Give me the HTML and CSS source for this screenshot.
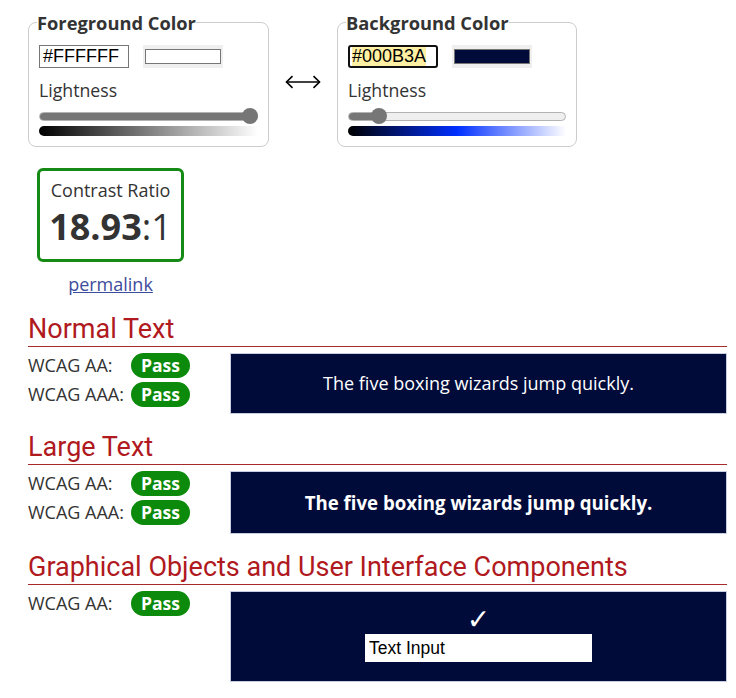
FILE: index.html
```html
<!DOCTYPE html>
<html lang="en">
<head>
<meta charset="utf-8">
<title>Contrast Checker</title>
<link rel="stylesheet" href="styles.css">
</head>
<body>
<div class="page">
  <div class="pickers">
    <fieldset class="picker">
      <legend>Foreground Color</legend>
      <div class="color-row">
        <div class="hex-input">#FFFFFF</div>
        <div class="swatch-btn"><div class="swatch swatch-fg"></div></div>
      </div>
      <div class="light-label">Lightness</div>
      <div class="slider">
        <div class="track"><div class="fill" style="width: calc(100% - 8px)"></div></div>
        <div class="thumb" style="left: calc(100% - 16px)"></div>
      </div>
      <div class="grad grad-fg"></div>
    </fieldset>
    <div class="swap">
      <svg width="36" height="14" viewBox="0 0 36 14" aria-hidden="true">
        <path d="M1.5 7 H34.5" stroke="#000" stroke-width="1.6" fill="none"/>
        <path d="M7.5 1.2 L1.5 7 L7.5 12.8" stroke="#000" stroke-width="1.6" fill="none"/>
        <path d="M28.5 1.2 L34.5 7 L28.5 12.8" stroke="#000" stroke-width="1.6" fill="none"/>
      </svg>
    </div>
    <fieldset class="picker">
      <legend>Background Color</legend>
      <div class="color-row">
        <div class="hex-input focused"><span class="sel">#000B3A</span></div>
        <div class="swatch-btn"><div class="swatch swatch-bg"></div></div>
      </div>
      <div class="light-label">Lightness</div>
      <div class="slider">
        <div class="track"><div class="fill" style="width: calc((100% - 16px) * 0.114 + 8px)"></div></div>
        <div class="thumb" style="left: calc((100% - 16px) * 0.114)"></div>
      </div>
      <div class="grad grad-bg"></div>
    </fieldset>
  </div>

  <div class="ratio-wrap">
    <div class="ratio">
      <div class="ratio-label">Contrast Ratio</div>
      <div class="ratio-value"><b>18.93</b>:1</div>
    </div>
    <a class="permalink" href="#">permalink</a>
  </div>

  <section class="result">
    <h2>Normal Text</h2>
    <div class="result-body">
      <div class="checks">
        <div class="check"><span class="check-label">WCAG AA:</span><span class="badge">Pass</span></div>
        <div class="check"><span class="check-label">WCAG AAA:</span><span class="badge">Pass</span></div>
      </div>
      <div class="sample sample-normal">The five boxing wizards jump quickly.</div>
    </div>
  </section>

  <section class="result">
    <h2>Large Text</h2>
    <div class="result-body">
      <div class="checks">
        <div class="check"><span class="check-label">WCAG AA:</span><span class="badge">Pass</span></div>
        <div class="check"><span class="check-label">WCAG AAA:</span><span class="badge">Pass</span></div>
      </div>
      <div class="sample sample-large">The five boxing wizards jump quickly.</div>
    </div>
  </section>

  <section class="result">
    <h2>Graphical Objects and User Interface Components</h2>
    <div class="result-body">
      <div class="checks">
        <div class="check"><span class="check-label">WCAG AA:</span><span class="badge">Pass</span></div>
      </div>
      <div class="sample sample-ui">
        <div class="tick">✓</div>
        <div class="text-input">Text Input</div>
      </div>
    </div>
  </section>
</div>
</body>
</html>
```
FILE: styles.css
```css
* { box-sizing: border-box; }
html, body { margin: 0; background: #fff; }
body {
  font-family: "Open Sans", "DejaVu Sans", sans-serif;
  font-size: 18px;
  color: #333;
}
.page {
  width: 736px;
  padding: 11px 9px 0 28px;
}

/* pickers */
.pickers {
  display: flex;
  align-items: flex-start;
}
.picker {
  width: 241px;
  margin: 0;
  padding: 0 10px 10px;
  border: 1px solid #ccc;
  border-radius: 8px;
  min-inline-size: 0;
}
.picker + .swap + .picker { width: 240px; }
.picker legend {
  padding: 0;
  margin-left: -2px;
  font-weight: 700;
  font-size: 18.3px;
  line-height: 23px;
  color: #333;
}
.color-row {
  display: flex;
  align-items: center;
  gap: 14px;
  margin-top: 11px;
}
.hex-input {
  width: 90px;
  height: 23px;
  border: 1px solid #767676;
  font-family: "Liberation Sans", Arial, sans-serif;
  font-size: 18px;
  line-height: 21px;
  color: #000;
  padding-left: 3px;
  background: #fff;
  white-space: nowrap;
  overflow: hidden;
}
.hex-input.focused {
  border: 2px solid #101010;
  border-radius: 3px;
  padding-left: 2px;
  line-height: 19px;
}
.sel { background: #fff0a3; }
.swatch-btn {
  width: 80px;
  height: 23px;
  background: #efefef;
  padding: 4px 2px;
}
.swatch {
  width: 100%;
  height: 100%;
  border: 1px solid #767676;
}
.swatch-fg { background: #fff; }
.swatch-bg { background: #000b3a; }
.light-label {
  margin-top: 11px;
  line-height: 23px;
  font-size: 17.7px;
  color: #333;
}
.slider {
  position: relative;
  height: 16px;
  margin-top: 6px;
}
.track {
  position: absolute;
  left: 0; right: 0; top: 3.5px;
  height: 9px;
  border-radius: 5px;
  background: #efefef;
  border: 1px solid #b2b2b2;
  overflow: hidden;
}
.fill {
  height: 100%;
  background: #767676;
}
.thumb {
  position: absolute;
  top: 0;
  width: 16px;
  height: 16px;
  border-radius: 50%;
  background: #767676;
}
.grad {
  height: 10px;
  margin-top: 2px;
  border-radius: 5px 0 0 5px;
}
.grad-fg { background: linear-gradient(to right, #000, #fff); }
.grad-bg { background: linear-gradient(to right, #000, hsl(229, 100%, 50%), #fff); }
.swap {
  width: 68px;
  display: flex;
  justify-content: center;
  margin-top: 64px;
}
.swap svg { display: block; margin-left: -1px; }

/* ratio */
.ratio-wrap {
  margin-top: 21px;
  margin-left: 9px;
  width: 147px;
  text-align: center;
}
.ratio {
  height: 94px;
  border: 3px solid #158a15;
  border-radius: 6px;
  padding-top: 8px;
}
.ratio-label {
  line-height: 23px;
  font-size: 18px;
}
.ratio-value {
  margin-top: 3px;
  font-size: 36px;
  line-height: 44px;
  color: #333;
}
.ratio-value b { font-weight: 700; }
.permalink {
  display: inline-block;
  margin-top: 11px;
  line-height: 23px;
  color: #3d4c9c;
  text-decoration: underline;
}

/* results */
.result h2 {
  margin: 18px 0 0;
  font-family: Roboto, "Liberation Sans", sans-serif;
  font-weight: 400;
  font-size: 27px;
  line-height: 30px;
  color: #b0191e;
  padding-bottom: 2px;
  border-bottom: 1px solid #a62a2a;
}
.result-body {
  display: grid;
  grid-template-columns: 202px 1fr;
  margin-top: 6px;
}
.checks {
  display: flex;
  flex-direction: column;
  gap: 4px;
}
.check {
  display: flex;
  align-items: center;
  height: 25px;
}
.check-label {
  width: 103px;
  color: #333;
  line-height: 23px;
}
.badge {
  width: 59px;
  height: 25px;
  border-radius: 13px;
  background: #0c8a0c;
  color: #fff;
  font-weight: 700;
  font-size: 17.5px;
  text-align: center;
  line-height: 25px;
}
.sample {
  background: #000b3a;
  border: 1px solid #c9cde0;
  color: #fff;
  text-align: center;
}
.sample-normal {
  padding: 18px 10px;
  line-height: 23px;
  font-size: 18px;
}
.sample-large {
  padding: 18px 10px;
  line-height: 25px;
  font-size: 18.67px;
  font-weight: 700;
}
.sample-ui {
  padding: 13px 10px 19px;
  display: flex;
  flex-direction: column;
  align-items: center;
}
.tick {
  font-family: "DejaVu Sans", sans-serif;
  font-weight: 700;
  font-size: 28px;
  line-height: 29px;
  height: 29px;
  color: #fff;
}
.text-input {
  width: 227px;
  height: 28px;
  background: #fff;
  color: #000;
  text-align: left;
  font-family: "Liberation Sans", Arial, sans-serif;
  font-size: 17.5px;
  line-height: 28px;
  padding-left: 4px;
}
```
